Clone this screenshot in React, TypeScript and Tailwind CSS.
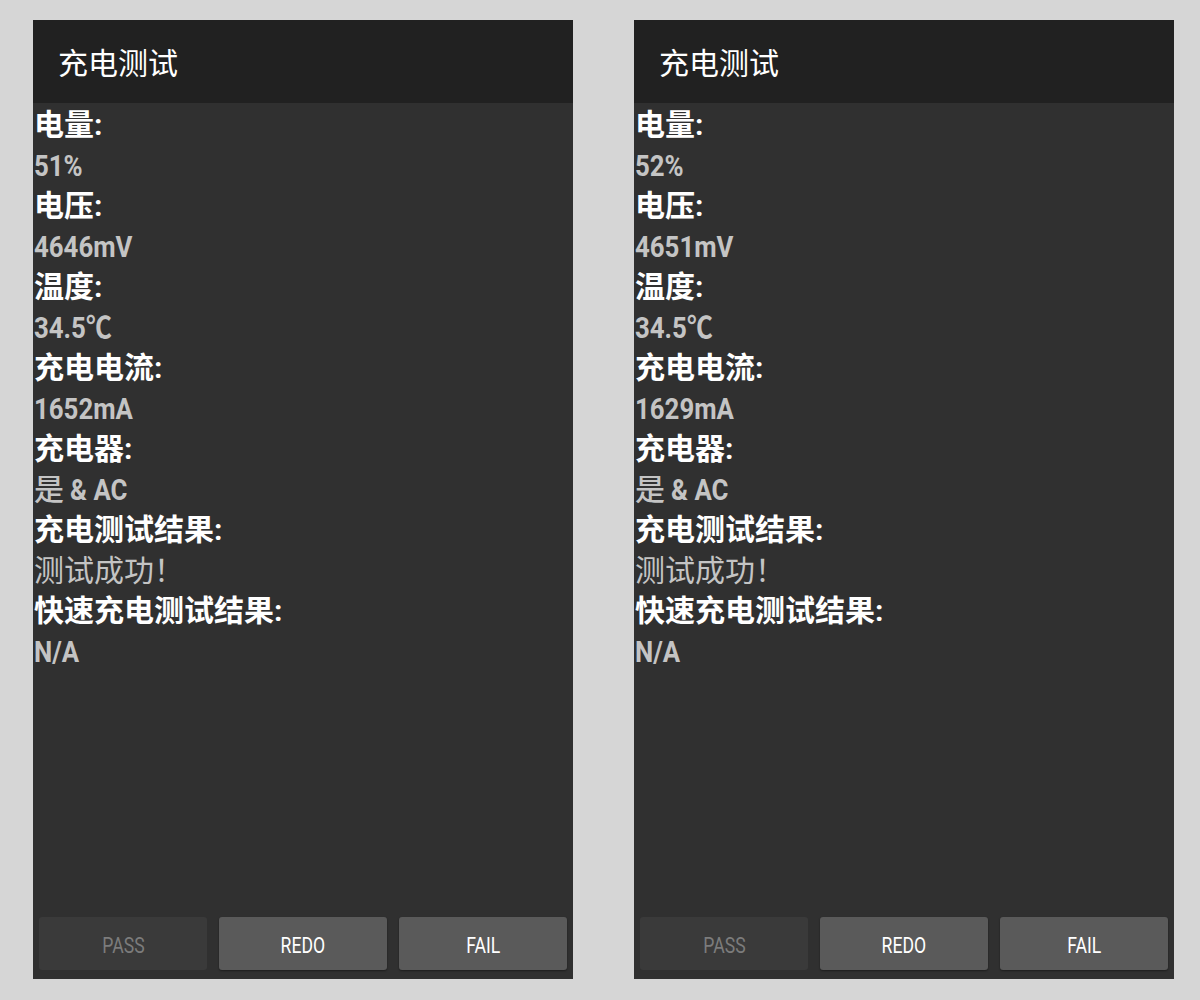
import React from "react";

type Item = { label: string; value: React.ReactNode };

const FONT = "font-['Roboto','Noto_Sans_CJK_SC',sans-serif]";

// condensed latin text, the device font is narrower than Roboto
const Cond: React.FC<{ children: React.ReactNode; className?: string }> = ({ children, className = "" }) => (
  <span className={`inline-block origin-left scale-x-[0.86] text-[30px] ${className}`}>{children}</span>
);

const PanelBody: React.FC<{ items: Item[] }> = ({ items }) => (
  <div className="flex-1 pt-[2px] pl-[1px]">
    {items.map((item) => (
      <div key={item.label}>
        <div className="text-[30px] leading-[40.5px] font-bold text-white">{item.label}</div>
        <div className="text-[30px] leading-[40.5px] text-[#c4c4c4] whitespace-nowrap">{item.value}</div>
      </div>
    ))}
  </div>
);

const BtnLabel: React.FC<{ text: string }> = ({ text }) => (
  <span className="inline-block scale-x-[0.8] pt-[3px]">{text}</span>
);

const Panel: React.FC<{ items: Item[] }> = ({ items }) => (
  <div className={`flex flex-col w-[540px] h-[959px] bg-[#303030] ${FONT}`}>
    <div className="h-[83px] bg-[#212121] flex items-center pl-[25px] pt-[4px] text-[30px] text-white">
      充电测试
    </div>
    <PanelBody items={items} />
    <div className="flex gap-[12px] px-[6px] pb-[9px]">
      <div className="flex-1 h-[53px] rounded-[3px] bg-[#3a3a3a] flex items-center justify-center text-[22px] text-[#7c7c7c]">
        <BtnLabel text="PASS" />
      </div>
      <div className="flex-1 h-[53px] rounded-[3px] bg-[#5a5a5a] shadow-[0_1px_2px_rgba(0,0,0,0.4)] flex items-center justify-center text-[22px] text-white">
        <BtnLabel text="REDO" />
      </div>
      <div className="flex-1 h-[53px] rounded-[3px] bg-[#5a5a5a] shadow-[0_1px_2px_rgba(0,0,0,0.4)] flex items-center justify-center text-[22px] text-white">
        <BtnLabel text="FAIL" />
      </div>
    </div>
  </div>
);

const makeItems = (pct: string, mv: string, ma: string): Item[] => [
  { label: "电量:", value: <Cond className="font-bold">{pct}</Cond> },
  { label: "电压:", value: <Cond className="font-bold">{mv}</Cond> },
  { label: "温度:", value: <Cond className="font-bold">34.5℃</Cond> },
  { label: "充电电流:", value: <Cond className="font-bold">{ma}</Cond> },
  {
    label: "充电器:",
    value: (
      <>
        <span className="font-medium">是</span>
        <Cond className="font-bold ml-[6px]">&amp; AC</Cond>
      </>
    ),
  },
  { label: "充电测试结果:", value: <span>测试成功！</span> },
  { label: "快速充电测试结果:", value: <Cond className="font-bold">N/A</Cond> },
];

export default function App() {
  return (
    <div className="w-[1200px] h-[1000px] bg-[#d6d6d6] flex gap-[61px] pt-[20px] pl-[33px]">
      <Panel items={makeItems("51%", "4646mV", "1652mA")} />
      <Panel items={makeItems("52%", "4651mV", "1629mA")} />
    </div>
  );
}
